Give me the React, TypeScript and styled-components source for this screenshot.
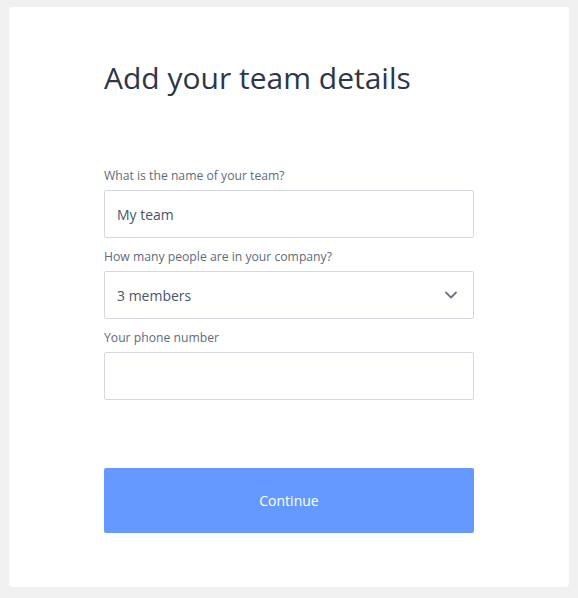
import React from "react";
import styled, { createGlobalStyle } from "styled-components";

const GlobalStyle = createGlobalStyle`
  html, body {
    margin: 0;
    padding: 0;
    background: #f0f0f0;
    font-family: "Open Sans", "Liberation Sans", sans-serif;
  }
  * {
    box-sizing: border-box;
  }
`;

const Page = styled.div`
  padding: 7px 9px 11px 9px;
  min-height: 598px;
`;

const Card = styled.div`
  background: #ffffff;
  border-radius: 4px;
  height: 580px;
  padding: 53px 95px 0 95px;
`;

const Title = styled.h1`
  margin: 0 0 72px 0;
  font-size: 30px;
  font-weight: 400;
  line-height: 36px;
  color: #2d3748;
`;

const Field = styled.div`
  display: flex;
  flex-direction: column;
  margin-bottom: 11px;
`;

const Label = styled.label`
  font-size: 12.2px;
  line-height: 16px;
  color: #5f6b7c;
  margin-bottom: 6px;
`;

const InputBox = styled.div`
  display: flex;
  align-items: center;
  height: 48px;
  width: 370px;
  border: 1px solid #d5d9df;
  border-radius: 2px;
  padding: 0 12px;
  font-size: 14px;
  color: #4a5568;
`;

const Chevron = styled.svg`
  margin-left: auto;
  width: 14px;
  height: 14px;
  margin-right: 3px;
`;

const Button = styled.button`
  display: block;
  width: 370px;
  height: 65px;
  margin-top: 68px;
  border: none;
  border-radius: 2px;
  background: #6699ff;
  color: #ffffff;
  font-family: "Open Sans", "Liberation Sans", sans-serif;
  font-size: 14px;
`;

export default function App() {
  return (
    <>
      <GlobalStyle />
      <Page>
        <Card>
          <Title>Add your team details</Title>
          <Field>
            <Label>What is the name of your team?</Label>
            <InputBox>My team</InputBox>
          </Field>
          <Field>
            <Label>How many people are in your company?</Label>
            <InputBox>
              3 members
              <Chevron viewBox="0 0 14 14" fill="none">
                <path
                  d="M2 4.5 L7 9.5 L12 4.5"
                  stroke="#6b7385"
                  strokeWidth="1.8"
                  strokeLinecap="round"
                  strokeLinejoin="round"
                />
              </Chevron>
            </InputBox>
          </Field>
          <Field>
            <Label>Your phone number</Label>
            <InputBox />
          </Field>
          <Button type="button">Continue</Button>
        </Card>
      </Page>
    </>
  );
}
